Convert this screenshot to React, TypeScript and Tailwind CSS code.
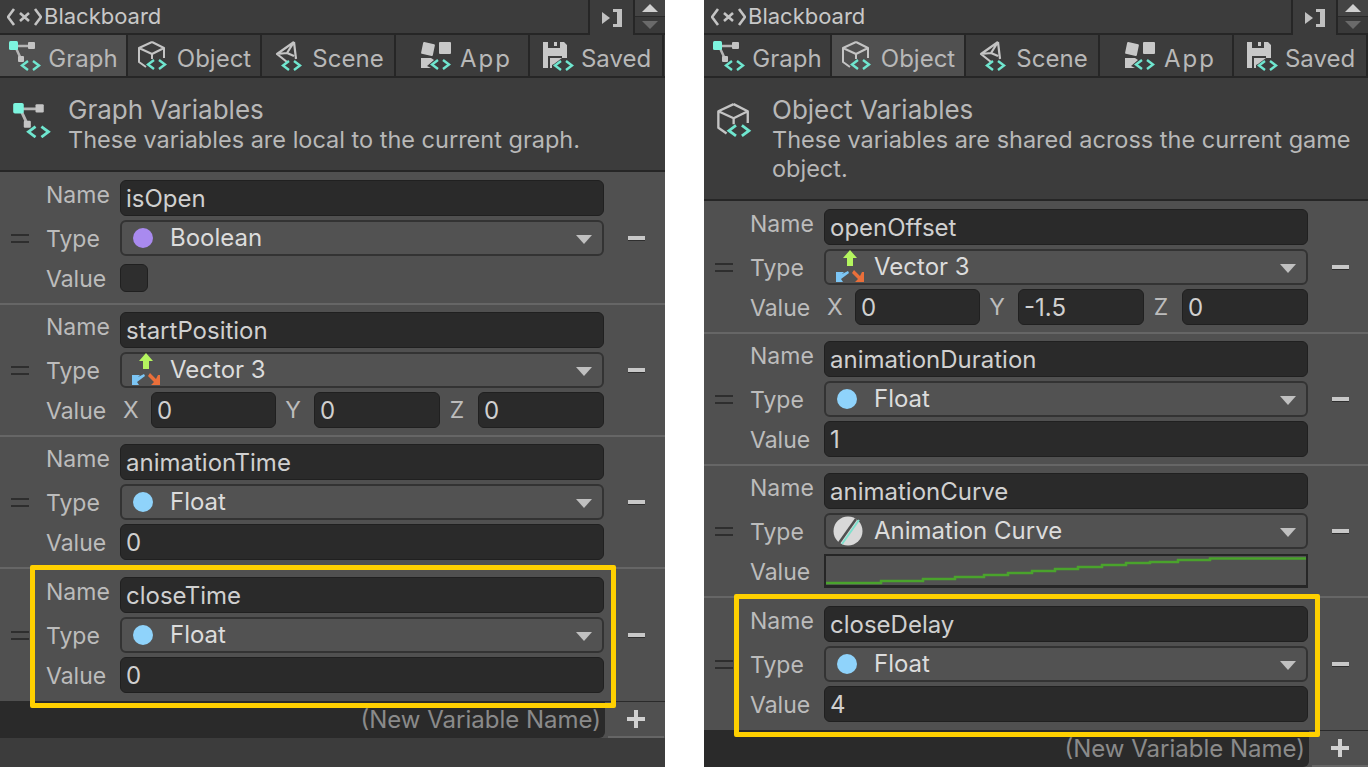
import type { ReactNode } from 'react';

function Chevrons({ x, y, s = 1 }: { x: number; y: number; s?: number }) {
  return (
    <g transform={`translate(${x} ${y}) scale(${s})`} fill="none" stroke="#6fe6cf" strokeWidth="2.4">
      <path d="M7 1 L1 5.5 L7 10" />
      <path d="M12 1 L18 5.5 L12 10" />
    </g>
  );
}

function GraphIcon({ size = 34 }: { size?: number }) {
  return (
    <svg width={size} height={size * 30 / 34} viewBox="0 0 34 30">
      <path d="M7 5 H26 M7 5 L13 18" stroke="#b5b5b5" strokeWidth="2.5" fill="none" />
      <rect x="1" y="0" width="9" height="9" rx="1.5" fill="#7df5df" />
      <rect x="20" y="1" width="7" height="7" rx="1" fill="#c4c4c4" />
      <rect x="10" y="15" width="6" height="6" rx="1" fill="#c4c4c4" />
      <Chevrons x={13} y={19} />
    </svg>
  );
}

function CubeIcon({ size = 34 }: { size?: number }) {
  return (
    <svg width={size} height={size * 30 / 34} viewBox="0 0 34 30">
      <path d="M15 1 L27 7 V17 M15 1 L2 7 V21 L9 26 M2 7 L15 13 L27 7 M15 13 V18" stroke="#c4c4c4" strokeWidth="2" strokeLinejoin="round" fill="none" />
      <Chevrons x={10} y={18} />
    </svg>
  );
}

function SceneIcon() {
  return (
    <svg width="34" height="30" viewBox="0 0 34 30">
      <path d="M22 1 L5 13 L15 21 M22 1 L24 18 M22 1 L15 12 L5 13 M15 12 L22 15" stroke="#c4c4c4" strokeWidth="2.2" strokeLinejoin="round" fill="none" />
      <Chevrons x={10} y={19} />
    </svg>
  );
}

function AppIcon() {
  return (
    <svg width="34" height="30" viewBox="0 0 34 30">
      <rect x="2" y="2" width="12" height="12" rx="1" fill="#c8c8c8" transform="rotate(12 8 8)" />
      <rect x="19" y="1" width="12" height="12" rx="1" fill="#c8c8c8" />
      <path d="M1 17 H11 L14 19 L7 25 L11 27 H1 Z" fill="#c8c8c8" />
      <Chevrons x={11} y={18} />
    </svg>
  );
}

function SaveIcon() {
  return (
    <svg width="34" height="30" viewBox="0 0 34 30">
      <path d="M2 1 H23 L26 4 V17 L21 17 L13 23 L11 24 V27 H2 Z M7 1 V7 H19 V1 H16 V5 H13 V1 Z" fill="#c8c8c8" fillRule="evenodd" />
      <path d="M7 15 H21 V17 H9 V27 H7 Z" fill="#3c3c3c" />
      <Chevrons x={13} y={19} />
    </svg>
  );
}

function VectorIcon() {
  return (
    <svg className="ml-px" width="32" height="36" viewBox="0 0 32 36">
      <path d="M9 9 L16 1 L23 9 H19 V17 H13 V9 Z" fill="#b4f55f" />
      <path d="M2 23 H10 L8 25 L14 22 L15 24 L7 30 L9 33 H2 Z" fill="#7cc6f5" />
      <path d="M30 23 V33 H21 L24 30 L18 24 L20 21 L26 27 L28 23 Z" fill="#ea6f3a" />
    </svg>
  );
}

function CurveIcon() {
  return (
    <svg width="30" height="30" viewBox="0 0 30 30">
      <circle cx="15" cy="15" r="14.5" fill="#d8d8d8" />
      <path d="M6 27 L23 3" stroke="#505050" strokeWidth="2.5" />
      <path d="M9 28 L26 4" stroke="#7de0cd" strokeWidth="2" />
    </svg>
  );
}

function Dot({ color }: { color: string }) {
  return <span className="ml-1 block h-5 w-5 rounded-full" style={{ backgroundColor: color }} />;
}

function Field({ children, className = '' }: { children?: ReactNode; className?: string }) {
  return (
    <div className={`flex h-9 items-center rounded-md border border-[#202020] bg-[#2a2a2a] px-[5px] pt-[2px] text-[24px] text-[#d0d0d0] ${className}`}>
      {children}
    </div>
  );
}

function TypeSelect({ icon, label }: { icon: ReactNode; label: string }) {
  return (
    <div className="relative flex h-9 items-center rounded-md border-2 border-[#333333] bg-[#525252] text-[24px] text-[#dcdcdc]">
      <span className="flex w-[48px] shrink-0 items-center pl-[7px]">{icon}</span>
      <span>{label}</span>
      <span className="absolute right-[10px] top-[13px] h-0 w-0 border-x-[8px] border-t-[9px] border-x-transparent border-t-[#c0c0c0]" />
    </div>
  );
}

function Label({ children, className = 'mt-[2px]' }: { children: ReactNode; className?: string }) {
  return <span className={`w-[74px] shrink-0 text-[23px] leading-none text-[#bcbcbc] ${className}`}>{children}</span>;
}

function VectorValue({ y = '0' }: { y?: string }) {
  return (
    <div className="flex flex-1 items-center text-[23px] text-[#bcbcbc]">
      <span className="w-[31px] pl-[3px]">X</span>
      <Field className="w-[125px]">0</Field>
      <span className="w-[38px] pr-[4px] text-center">Y</span>
      <Field className="w-[126px]">{y}</Field>
      <span className="w-[38px] pr-[4px] text-center">Z</span>
      <Field className="flex-1">0</Field>
    </div>
  );
}

function CurveValue() {
  return (
    <div className="h-[34px] flex-1 border-2 border-b-[3px] border-[#262626] bg-[#525252]">
      <svg className="block h-full w-full" viewBox="0 0 480 29" preserveAspectRatio="none">
        <path
          d="M0 27 H55 V25 H97 V23 H129 V21 H158 V19 H182 V17 H206 V15 H229 V13 H252 V11 H276 V9 H300 V7 H324 V6 H352 V4 H384 V2.5 H480"
          fill="none"
          stroke="#4aa32c"
          strokeWidth="2.5"
        />
      </svg>
    </div>
  );
}

type Variable = {
  name: string;
  typeIcon: ReactNode;
  typeLabel: string;
  value: ReactNode;
  highlight?: boolean;
};

function VariableRow({ item, first, last }: { item: Variable; first: boolean; last: boolean }) {
  return (
    <div className={`relative flex items-center bg-[#505050] pb-[7px] ${first ? 'pt-2' : 'pt-[7px]'} ${last ? 'h-[132px]' : 'border-b-2 border-[#666666]'}`}>
      <div className="flex w-[46px] shrink-0 justify-center pr-[6px]">
        <div className="h-[9px] w-[18px] border-y-2 border-[#2e2e2e]" />
      </div>
      <div className="flex w-[558px] shrink-0 flex-col gap-1">
        <div className="flex items-center">
          <Label className="mb-[6px]">Name</Label>
          <Field className="flex-1">{item.name}</Field>
        </div>
        <div className="flex items-center">
          <Label>Type</Label>
          <div className="flex-1"><TypeSelect icon={item.typeIcon} label={item.typeLabel} /></div>
        </div>
        <div className="flex h-9 items-center">
          <Label>Value</Label>
          {item.value}
        </div>
      </div>
      <div className="flex flex-1 justify-center pl-[4px]">
        <div className="h-[4px] w-[17px] bg-[#c8c8c8] shadow-[0_1px_0_#2e2e2e]" />
      </div>
      {item.highlight && (
        <div className="absolute left-[30px] top-[-4px] h-[143px] w-[586px] rounded-[2px] border-[5px] border-[#ffd000]" />
      )}
    </div>
  );
}

function Tab({ icon, label, active, width, labelClass = '' }: { icon: ReactNode; label: string; active: boolean; width: string; labelClass?: string }) {
  return (
    <div className={`flex items-center justify-center gap-[6px] border-r-2 border-[#262626] ${width} ${active ? 'bg-[#505050]' : ''}`}>
      {icon}
      <span className={`mt-[6px] text-[24px] leading-none text-[#b8b8b8] ${labelClass}`}>{label}</span>
    </div>
  );
}

function Panel({ title, subtitle, active, icon, vars, width }: {
  title: string;
  subtitle: string;
  active: string;
  icon: ReactNode;
  vars: Variable[];
  width: string;
}) {
  return (
    <div className={`flex h-[767px] shrink-0 flex-col overflow-hidden bg-[#3c3c3c] ${width}`}>
      <div className="flex h-[35px] shrink-0">
        <div className="flex flex-1 items-center gap-[2px] border-b-2 border-r-2 border-[#262626] pl-[7px]">
          <svg width="35" height="20" viewBox="0 0 35 20" fill="none" stroke="#c4c4c4" strokeWidth="2.6">
            <path d="M7 2 L1 10 L7 18" />
            <path d="M28 2 L34 10 L28 18" />
            <path d="M13 6 L22 14 M22 6 L13 14" />
          </svg>
          <span className="mb-[2px] text-[22px] leading-none text-[#c8c8c8]">Blackboard</span>
        </div>
        <div className="flex w-[43px] items-center justify-center">
          <svg width="20" height="20" viewBox="0 0 20 20">
            <path d="M0 4 L8 10 L0 16 Z" fill="#c0c0c0" />
            <path d="M11 1 H20 V19 H11 V16 H15 V4 H11 Z" fill="#c0c0c0" />
          </svg>
        </div>
        <div className="flex w-[32px] flex-col border-l-2 border-[#262626]">
          <div className="flex h-[17px] items-center justify-center border-b border-[#2a2a2a] bg-[#444444]">
            <span className="h-0 w-0 border-x-[8px] border-b-[8px] border-x-transparent border-b-[#d0d0d0]" />
          </div>
          <div className="flex flex-1 items-center justify-center border-b-2 border-[#262626] bg-[#3a3a3a]">
            <span className="h-0 w-0 border-x-[8px] border-t-[8px] border-x-transparent border-t-[#6a6a6a]" />
          </div>
        </div>
      </div>
      <div className="flex h-[43px] shrink-0 border-b-2 border-[#262626]">
        <Tab icon={<GraphIcon />} label="Graph" active={active === 'Graph'} width="w-[128px]" />
        <Tab icon={<CubeIcon />} label="Object" active={active === 'Object'} width="w-[134px]" />
        <Tab icon={<SceneIcon />} label="Scene" active={active === 'Scene'} width="w-[134px]" />
        <Tab icon={<AppIcon />} label="App" active={active === 'App'} width="w-[134px] pl-[8px]" labelClass="tracking-[2px]" />
        <Tab icon={<SaveIcon />} label="Saved" active={active === 'Saved'} width="w-[134px]" />
      </div>
      <div className="flex shrink-0 border-b-2 border-[#262626] pb-[16px] pl-[12px] pt-[17px]">
        <div className="w-[56px] shrink-0 pt-[8px]">{icon}</div>
        <div className="text-[#b8b8b8]">
          <div className="text-[26px] leading-[30px]">{title}</div>
          <div className="text-[23.5px] leading-[29px]">{subtitle}</div>
        </div>
      </div>
      {vars.map((item, i) => (
        <VariableRow key={item.name} item={item} first={i === 0} last={i === vars.length - 1} />
      ))}
      <div className="flex h-[37px] shrink-0 gap-[3px] border-t border-[#2a2a2a] bg-[#505050]">
        <div className="w-[605px] rounded-br-md bg-[#2a2a2a] pr-[4px] text-right text-[24px] leading-[35px] text-[#8a8a8a]">(New Variable Name)</div>
        <div className="flex w-[56px] items-center justify-center border-b-2 border-[#666666]">
          <svg width="18" height="18" viewBox="0 0 18 18">
            <path d="M7 0 H11 V7 H18 V11 H11 V18 H7 V11 H0 V7 H7 Z" fill="#d0d0d0" />
          </svg>
        </div>
      </div>
    </div>
  );
}

const floatDot = <Dot color="#8fd3fb" />;

const graphVars: Variable[] = [
  { name: 'isOpen', typeIcon: <Dot color="#a98aef" />, typeLabel: 'Boolean', value: <div className="h-7 w-7 rounded-md border border-[#202020] bg-[#2e2e2e]" /> },
  { name: 'startPosition', typeIcon: <VectorIcon />, typeLabel: 'Vector 3', value: <VectorValue /> },
  { name: 'animationTime', typeIcon: floatDot, typeLabel: 'Float', value: <Field className="flex-1">0</Field> },
  { name: 'closeTime', typeIcon: floatDot, typeLabel: 'Float', value: <Field className="flex-1">0</Field>, highlight: true },
];

const objectVars: Variable[] = [
  { name: 'openOffset', typeIcon: <VectorIcon />, typeLabel: 'Vector 3', value: <VectorValue y="-1.5" /> },
  { name: 'animationDuration', typeIcon: floatDot, typeLabel: 'Float', value: <Field className="flex-1">1</Field> },
  { name: 'animationCurve', typeIcon: <CurveIcon />, typeLabel: 'Animation Curve', value: <CurveValue /> },
  { name: 'closeDelay', typeIcon: floatDot, typeLabel: 'Float', value: <Field className="flex-1">4</Field>, highlight: true },
];

export default function App() {
  return (
    <div className="flex h-[767px] w-[1368px] gap-[39px] overflow-hidden bg-white font-['Inter',sans-serif]">
      <Panel
        title="Graph Variables"
        subtitle="These variables are local to the current graph."
        active="Graph"
        icon={<GraphIcon size={40} />}
        vars={graphVars}
        width="w-[665px]"
      />
      <Panel
        title="Object Variables"
        subtitle="These variables are shared across the current game object."
        active="Object"
        icon={<CubeIcon size={40} />}
        vars={objectVars}
        width="w-[664px]"
      />
    </div>
  );
}
